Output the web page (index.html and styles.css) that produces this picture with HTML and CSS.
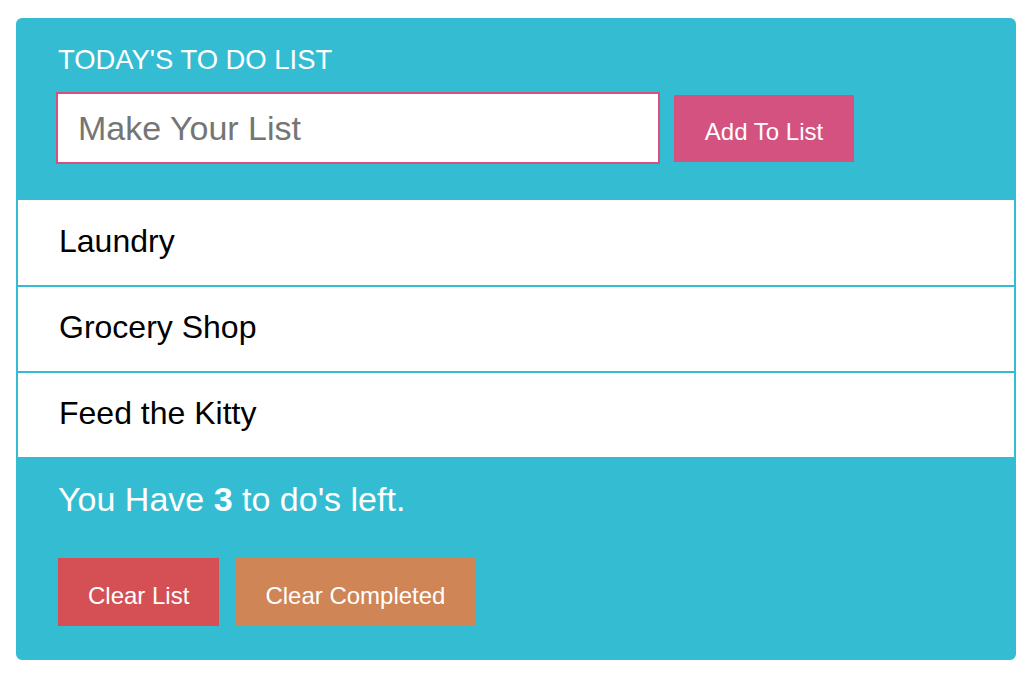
FILE: index.html
```html
<!DOCTYPE html>
<html lang="en">
<head>
<meta charset="utf-8">
<title>Today's To Do List</title>
<link rel="stylesheet" href="styles.css">
</head>
<body>
<div class="todo">
  <header class="todo-head">
    <h1 class="todo-title">TODAY'S TO DO LIST</h1>
    <form class="add-form">
      <input class="add-input" type="text" placeholder="Make Your List">
      <button class="btn btn-add" type="button">Add To List</button>
    </form>
  </header>
  <ul class="todo-list">
    <li class="todo-item">Laundry</li>
    <li class="todo-item">Grocery Shop</li>
    <li class="todo-item">Feed the Kitty</li>
  </ul>
  <footer class="todo-foot">
    <p class="todo-count">You Have <strong>3</strong> to do's left.</p>
    <div class="actions">
      <button class="btn btn-clear" type="button">Clear List</button>
      <button class="btn btn-done" type="button">Clear Completed</button>
    </div>
  </footer>
</div>
</body>
</html>
```
FILE: styles.css
```css
html, body {
  margin: 0;
  padding: 0;
  background: #ffffff;
}

body {
  font-family: "Liberation Sans", Arial, Helvetica, sans-serif;
}

.todo {
  box-sizing: border-box;
  width: 1000px;
  margin: 18px 0 0 16px;
  background: #34bdd2;
  border: 2px solid #34bdd2;
  border-radius: 6px;
  overflow: hidden;
}

.todo-head {
  padding: 24px 0 36px 39px;
}

.todo-title {
  margin: 0 0 0 1px;
  font-size: 27.4px;
  line-height: 31px;
  font-weight: normal;
  color: #ffffff;
}

.add-form {
  display: flex;
  align-items: center;
  gap: 14px;
  margin: 17px 0 0 -1px;
}

.add-input {
  box-sizing: border-box;
  width: 604px;
  height: 72px;
  margin: 0;
  padding: 0 20px;
  border: 2px solid #d4527f;
  border-radius: 0;
  background: #ffffff;
  font-family: "Liberation Sans", Arial, Helvetica, sans-serif;
  font-size: 34px;
  color: #333333;
  outline: none;
}

.add-input::placeholder {
  color: #757575;
  opacity: 1;
}

.btn {
  box-sizing: border-box;
  height: 68px;
  margin: 0;
  padding: 7px 30px 0;
  border: none;
  border-radius: 0;
  font-family: "Liberation Sans", Arial, Helvetica, sans-serif;
  font-size: 24px;
  color: #ffffff;
  cursor: pointer;
}

.btn-add {
  width: 180px;
  height: 67px;
  padding: 7px 0 0;
  background: #d4527f;
}

.todo-list {
  margin: 0;
  padding: 0;
  list-style: none;
}

.todo-item {
  box-sizing: border-box;
  display: flex;
  align-items: center;
  height: 85px;
  padding: 0 0 3px 41px;
  background: #ffffff;
  font-size: 32px;
  color: #000000;
}

.todo-item + .todo-item {
  height: 86px;
  border-top: 2px solid #34bdd2;
}

.todo-foot {
  padding: 23px 40px 32px;
}

.todo-count {
  margin: 0;
  font-size: 34px;
  line-height: 39px;
  color: #ffffff;
}

.actions {
  display: flex;
  gap: 16px;
  margin-top: 39px;
}

.btn-clear {
  background: #d55055;
}

.btn-done {
  background: #d08556;
}
```
